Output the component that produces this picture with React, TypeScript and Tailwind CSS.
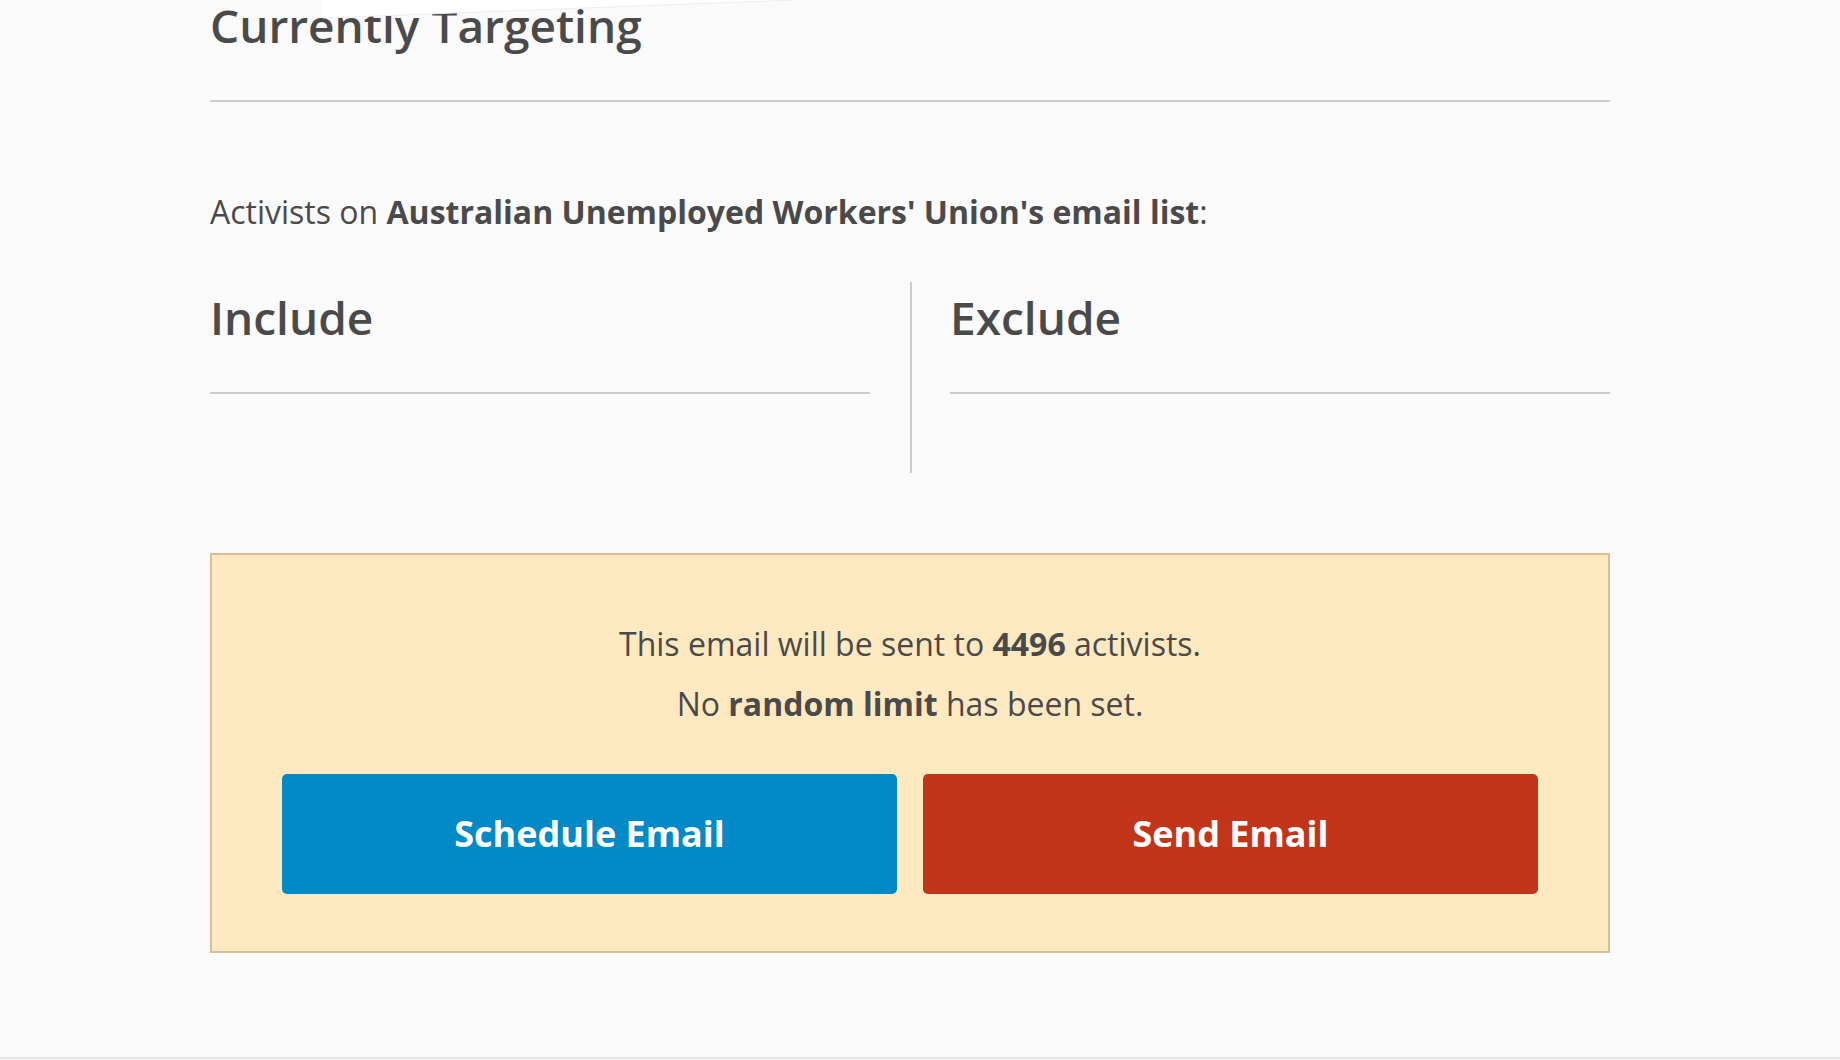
const font = { fontFamily: '"Open Sans", "Liberation Sans", sans-serif' };

function ColumnHeading({ children }: { children: React.ReactNode }) {
  return (
    <h3 className="mt-[10px] border-b-2 border-[#cbcbcb] pb-[50px] text-[46px] font-semibold leading-[50px] text-[#4a4a4a]">
      {children}
    </h3>
  );
}

export default function App() {
  return (
    <div className="relative min-h-screen overflow-hidden bg-[#fafafa] text-[#4a4a4a]" style={font}>
      {/* corner of a card sliding over the heading */}
      <svg className="absolute left-0 top-0 z-10" width="900" height="24" viewBox="0 0 900 24">
        <polygon points="323,0 323,18 795,0" fill="#ffffff" />
        <line x1="323" y1="18" x2="795" y2="0" stroke="#ededed" strokeWidth="1" />
      </svg>

      <div className="ml-[210px] w-[1400px]">
        <h2 className="border-b-2 border-[#cbcbcb] pb-[50px] text-[46px] font-semibold leading-[50px]">
          Currently Targeting
        </h2>

        <p className="mt-[86px] text-[32px] font-normal leading-[48px]">
          Activists on <span className="font-bold">Australian Unemployed Workers' Union's email list</span>:
        </p>

        <div className="mt-[46px] grid grid-cols-2">
          <div className="pr-[40px] pb-[79px]">
            <ColumnHeading>Include</ColumnHeading>
          </div>
          <div className="border-l-2 border-[#cbcbcb] pl-[38px] pb-[79px]">
            <ColumnHeading>Exclude</ColumnHeading>
          </div>
        </div>

        <div className="mt-[80px] border-2 border-[#d6c096] bg-[#ffe9c0] px-[70px] pt-[59px] pb-[57px]">
          <p className="text-center text-[32px] font-normal leading-[60px]">
            This email will be sent to <span className="font-bold">4496</span> activists.
          </p>
          <p className="text-center text-[32px] font-normal leading-[60px]">
            No <span className="font-bold">random limit</span> has been set.
          </p>
          <div className="mt-[40px] grid grid-cols-2 gap-[26px]">
            <button className="h-[120px] rounded-[5px] bg-[#0289c7] text-[36px] font-bold text-white">
              Schedule Email
            </button>
            <button className="h-[120px] rounded-[5px] bg-[#c33519] text-[36px] font-bold text-white">
              Send Email
            </button>
          </div>
        </div>
      </div>

      <div className="mt-[104px] h-[40px] border-t-2 border-[#e6e6e6]" />
    </div>
  );
}
